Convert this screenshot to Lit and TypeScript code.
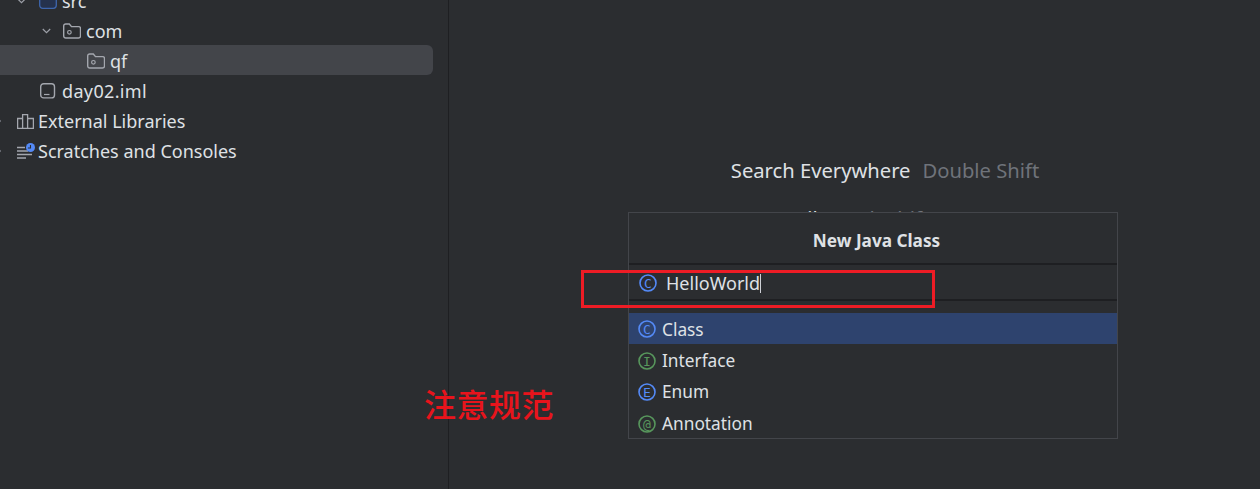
import { LitElement, html, css, svg } from 'lit';
import { customElement } from 'lit/decorators.js';

const folder = svg`<path d="M.7 3a2 2 0 0 1 2-2h3.6l2.2 2.6h7a2 2 0 0 1 2 2V13a2 2 0 0 1-2 2H2.7a2 2 0 0 1-2-2z" fill="none" stroke="#a4a7ae" stroke-width="1.4"/><circle cx="6.4" cy="9.3" r="1.8" fill="none" stroke="#a4a7ae" stroke-width="1.2"/>`;
const chevron = svg`<path d="M.8 1l3.7 3.7L8.2 1" fill="none" stroke="#9da0a8" stroke-width="1.2"/>`;
const tip = svg`<path d="M-3 1l3.4 4-3.4 4" fill="none" stroke="#7a7d85" stroke-width="1.1"/>`;
const moduleFolder = svg`<rect x=".7" y=".7" width="16.6" height="14.6" rx="3" fill="#25324d" stroke="#3e66ad" stroke-width="1.3"/>`;
const iml = svg`<rect x=".7" y=".7" width="13.8" height="14.2" rx="3" fill="none" stroke="#a4a7ae" stroke-width="1.4"/><path d="M4 11.5h5.5" stroke="#a4a7ae" stroke-width="1.2"/>`;
const libs = svg`<path d="M.6 4.5h5v9.9h-5zM5.6.6h5v13.8h-5zM10.6 4.5h5.8v9.9h-5.8z" fill="none" stroke="#a4a7ae" stroke-width="1.3"/>`;
const scratches = svg`<path d="M0 4.5h8M0 8h11M0 11.5h15M0 15h9" stroke="#a4a7ae" stroke-width="1.3"/><circle cx="13.5" cy="4.5" r="4.5" fill="#548af7"/><path d="M13.5 2v3h-2.6" fill="none" stroke="#2b2d30" stroke-width="1.1"/>`;

const kinds = [
  { label: 'Class', letter: 'C', color: '#548af7', selected: true },
  { label: 'Interface', letter: 'I', color: '#57965c', selected: false },
  { label: 'Enum', letter: 'E', color: '#548af7', selected: false },
  { label: 'Annotation', letter: '@', color: '#57965c', selected: false },
];

@customElement('kind-icon')
export class KindIcon extends LitElement {
  static properties = { letter: {}, color: {} };
  letter = 'C';
  color = '#548af7';

  static styles = css`
    :host { display: block; width: 18px; height: 18px; }
    svg { display: block; }
    text { font: 400 13px "DejaVu Sans Mono", monospace; }
  `;

  render() {
    return html`<svg width="18" height="18" viewBox="0 0 18 18">
      <circle cx="9" cy="9" r="8" fill="none" stroke=${this.color} stroke-width="1.6"></circle>
      <text x="9" y="13.6" text-anchor="middle" fill=${this.color}>${this.letter}</text>
    </svg>`;
  }
}

@customElement('app-root')
export class AppRoot extends LitElement {
  static styles = css`
    :host {
      display: block;
      width: 1260px;
      height: 489px;
      overflow: hidden;
      position: relative;
      background: #2b2d30;
      color: #dfe1e5;
      font: 18px/30px "Noto Sans", sans-serif;
    }
    .layout { display: grid; grid-template-columns: 449px 1fr; height: 100%; }
    .tree { border-right: 1px solid #1e1f22; padding-right: 15px; margin-top: -15px; }
    .row {
      display: flex;
      align-items: center;
      height: 30px;
      box-sizing: border-box;
      padding-top: 2px;
      white-space: nowrap;
    }
    .row svg { flex: none; display: block; }
    .row.selected { background: #43454a; border-radius: 0 6px 6px 0; }
    .wide { letter-spacing: 0.35px; }
    .hints { display: flex; flex-direction: column; align-items: center; padding: 155px 0 0 61px; }
    .hint { display: flex; gap: 12px; height: 48px; font-size: 20.2px; white-space: nowrap; }
    .hint span { color: #6f737a; }
    .hint.next { margin-left: -74px; }
    .dialog {
      position: absolute;
      left: 628px;
      top: 212px;
      width: 490px;
      height: 227px;
      box-sizing: border-box;
      border: 1px solid #43454a;
      background: #2b2d30;
      display: flex;
      flex-direction: column;
    }
    .title {
      height: 52px;
      box-sizing: border-box;
      padding: 7px 0 0 7px;
      border-bottom: 2px solid #1e1f22;
      display: flex;
      align-items: center;
      justify-content: center;
      font-weight: 700;
      font-size: 17.2px;
    }
    .field {
      height: 32px;
      padding: 2px 0 0 10px;
      border-bottom: 2px solid #1e1f22;
      display: flex;
      align-items: center;
      gap: 9px;
      margin-bottom: 12px;
    }
    .caret { display: inline-block; width: 1px; height: 19px; background: #ced0d6; vertical-align: -3px; }
    .option {
      height: 31.3px;
      box-sizing: border-box;
      padding: 1.5px 0 0 9px;
      display: flex;
      align-items: center;
      gap: 6px;
      line-height: 1;
      font-size: 17.3px;
    }
    .option:last-child { padding-top: 3px; }
    .option.selected { background: #2e436e; }
    .mark {
      position: absolute;
      left: 581px;
      top: 270px;
      width: 354px;
      height: 38px;
      box-sizing: border-box;
      border: 3px solid #ee1c25;
    }
    .note {
      position: absolute;
      left: 424px;
      top: 383px;
      color: #e8141c;
      font: 500 32px/40px "Noto Sans CJK SC", "Liberation Serif", serif;
      letter-spacing: 0.5px;
    }
  `;

  render() {
    return html`
      <div class="layout">
        <div class="tree">
          <div class="row"><svg style="margin-left:17px;margin-right:13px" width="9" height="6" viewBox="0 0 9 6">${chevron}</svg><svg style="margin-right:5px" width="18" height="16" viewBox="0 0 18 16">${moduleFolder}</svg>src</div>
          <div class="row"><svg style="margin-left:42px;margin-right:12px" width="9" height="6" viewBox="0 0 9 6">${chevron}</svg><svg style="margin-right:5px" width="18" height="16" viewBox="0 0 18 16">${folder}</svg>com</div>
          <div class="row selected"><svg style="margin-left:87px;margin-right:5px" width="18" height="16" viewBox="0 0 18 16">${folder}</svg>qf</div>
          <div class="row"><svg style="margin-left:40px;margin-right:6px" width="16" height="16" viewBox="0 0 16 16">${iml}</svg><span class="wide">day02.iml</span></div>
          <div class="row"><svg style="margin-right:16px" width="1" height="10" viewBox="0 0 1 10">${tip}</svg><svg style="margin-right:4px" width="17" height="15" viewBox="0 0 17 15">${libs}</svg>External Libraries</div>
          <div class="row"><svg style="margin-right:16px" width="1" height="10" viewBox="0 0 1 10">${tip}</svg><svg style="margin-right:3px" width="18" height="16" viewBox="0 0 18 16">${scratches}</svg>Scratches and Consoles</div>
        </div>
        <div class="hints">
          <div class="hint">Search Everywhere<span>Double Shift</span></div>
          <div class="hint next">Go to File<span>Ctrl+Shift+N</span></div>
        </div>
      </div>
      <div class="dialog">
        <div class="title">New Java Class</div>
        <div class="field">
          <kind-icon letter="C" color="#548af7"></kind-icon>
          <div>HelloWorld<i class="caret"></i></div>
        </div>
        ${kinds.map(k => html`
          <div class="option ${k.selected ? 'selected' : ''}">
            <kind-icon .letter=${k.letter} .color=${k.color}></kind-icon>${k.label}
          </div>`)}
      </div>
      <div class="mark"></div>
      <div class="note">注意规范</div>
    `;
  }
}
